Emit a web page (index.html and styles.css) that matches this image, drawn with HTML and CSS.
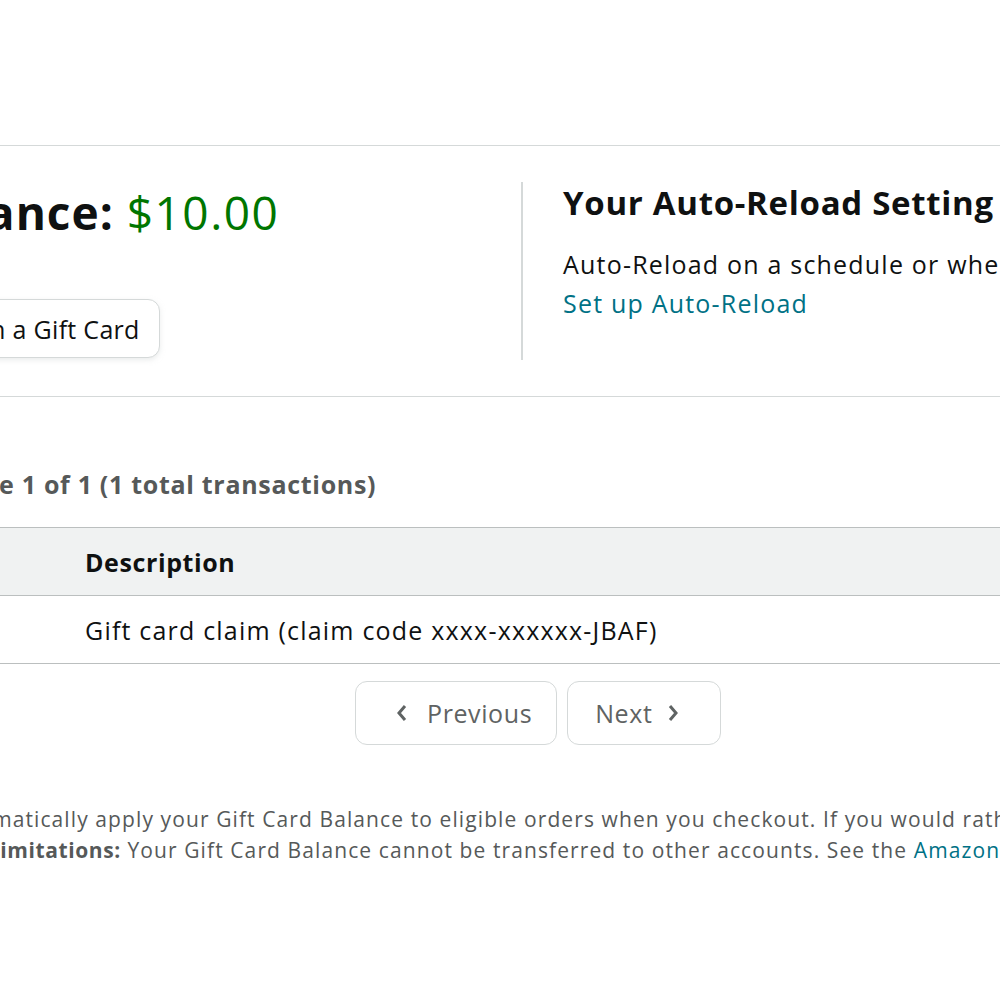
FILE: index.html
```html
<!DOCTYPE html>
<html lang="en">
<head>
<meta charset="UTF-8" />
<title>Gift Card Balance</title>
<link rel="stylesheet" href="styles.css">
</head>
<body>
<div class="page">

  <!-- Saldo + Auto-Reload -->
  <section class="summary">
    <div class="balance-col">
      <h1 class="balance-title">Gift Card Balance: <span class="amount">$10.00</span></h1>
      <button class="btn redeem">Redeem a Gift Card</button>
    </div>
    <div class="reload-col">
      <h2 class="reload-title">Your Auto-Reload Setting</h2>
      <p class="reload-text">Auto-Reload on a schedule or when your balance gets low.<br>
      <a href="#" class="link">Set up Auto-Reload</a></p>
    </div>
  </section>

  <!-- Transações -->
  <p class="page-info">Page 1 of 1 (1 total transactions)</p>

  <table class="activity">
    <thead>
      <tr>
        <th class="col-date">Date</th>
        <th class="col-desc">Description</th>
        <th class="col-amt">Amount</th>
        <th class="col-bal">Closing balance</th>
      </tr>
    </thead>
    <tbody>
      <tr>
        <td class="col-date">Feb 14, 2024</td>
        <td class="col-desc">Gift card claim (claim code xxxx-xxxxxx-JBAF)</td>
        <td class="col-amt amount">+$10.00</td>
        <td class="col-bal">$10.00</td>
      </tr>
    </tbody>
  </table>

  <div class="pager">
    <button class="btn page-btn prev" disabled>
      <svg width="11" height="18" viewBox="0 0 11 18"><polyline points="9,2 3,9 9,16" fill="none" stroke="currentColor" stroke-width="3"/></svg>
      Previous
    </button>
    <button class="btn page-btn next" disabled>
      Next
      <svg width="11" height="18" viewBox="0 0 11 18"><polyline points="2,2 8,9 2,16" fill="none" stroke="currentColor" stroke-width="3"/></svg>
    </button>
  </div>

  <!-- Notas -->
  <div class="notes">
    <p>We will automatically apply your Gift Card Balance to eligible orders when you checkout. If you would rather not use your balance, you can deselect it as a payment method during checkout.</p>
    <p class="limits"><strong>Gift Card Balance Limitations:</strong> Your Gift Card Balance cannot be transferred to other accounts. See the <a href="#" class="link">Amazon Gift Card Terms and Conditions</a>.</p>
  </div>

</div>
</body>
</html>
```

FILE: styles.css
```css
body {
  margin: 0;
  background: #fff;
  color: #0f1111;
  font-family: "Open Sans", "Noto Sans", Arial, sans-serif;
  font-size: 25px;
  line-height: 34px;
  letter-spacing: 1.2px;
  overflow: hidden;
}

strong, th, .page-info {
  letter-spacing: 0.6px;
}

.page {
  padding-top: 145px;
  width: 2000px;
  white-space: nowrap;
}

.link {
  color: #007185;
  text-decoration: none;
}

.btn {
  font-family: inherit;
  letter-spacing: inherit;
  background: #fff;
  border: 1px solid #d5d9d9;
  border-radius: 12px;
  box-shadow: 0 2px 5px rgba(213, 217, 217, 0.5);
  color: #0f1111;
  box-sizing: border-box;
}

/* Saldo + Auto-Reload */
.summary {
  display: flex;
  border-top: 1px solid #d5d9d9;
  border-bottom: 1px solid #d5d9d9;
  padding: 36px 0;
}

.balance-col {
  width: 836px;
  margin-left: -315px;
}

.balance-title {
  margin: 3px 0 0;
  font-size: 46px;
  line-height: 54px;
  font-weight: 700;
  letter-spacing: 1px;
}

.amount {
  color: #007600;
  font-weight: 400;
}

.balance-title .amount {
  letter-spacing: 1.5px;
}

.redeem {
  margin: 60px 0 0 202px;
  height: 59px;
  padding: 0 19px 0 20px;
  font-size: 25px;
  letter-spacing: 0.3px;
}

.reload-col {
  border-left: 2px solid #d5d9d9;
  height: 178px;
  padding-left: 40px;
}

.reload-title {
  margin: 1px 0 0;
  font-size: 33px;
  line-height: 40px;
  font-weight: 700;
  letter-spacing: 0.7px;
}

.reload-text {
  margin: 22px 0 0;
  line-height: 39px;
}

/* Transações */
.page-info {
  margin: 70px 0 26px -48px;
  font-weight: 700;
  letter-spacing: 0.7px;
  color: #565959;
}

.activity {
  border-collapse: collapse;
  table-layout: fixed;
  width: 1900px;
  margin-left: -215px;
}

.activity th,
.activity td {
  text-align: left;
  padding: 17px 0 16px;
  overflow: hidden;
}

.activity thead tr {
  background: #f0f2f2;
  border-top: 1px solid #bbbfbf;
  border-bottom: 1px solid #bbbfbf;
}

.activity tbody tr {
  border-bottom: 1px solid #bbbfbf;
}

.col-date { width: 300px; }
.col-desc { width: 1000px; }

.pager {
  display: flex;
  gap: 10px;
  margin: 17px 0 0 355px;
}

.page-btn {
  display: flex;
  align-items: center;
  height: 64px;
  font-size: 25px;
  letter-spacing: 0.6px;
  color: #5f6363;
  box-shadow: none;
}

.prev {
  gap: 20px;
  padding: 0 24px 0 40px;
}

.next {
  gap: 16px;
  padding: 0 41px 0 27px;
}

.notes {
  margin: 59px 0 0 -140px;
  font-size: 21px;
  line-height: 31px;
  letter-spacing: 1.1px;
  color: #565959;
}

.notes p {
  margin: 0;
}

.notes .limits {
  margin-left: -70px;
}
```
